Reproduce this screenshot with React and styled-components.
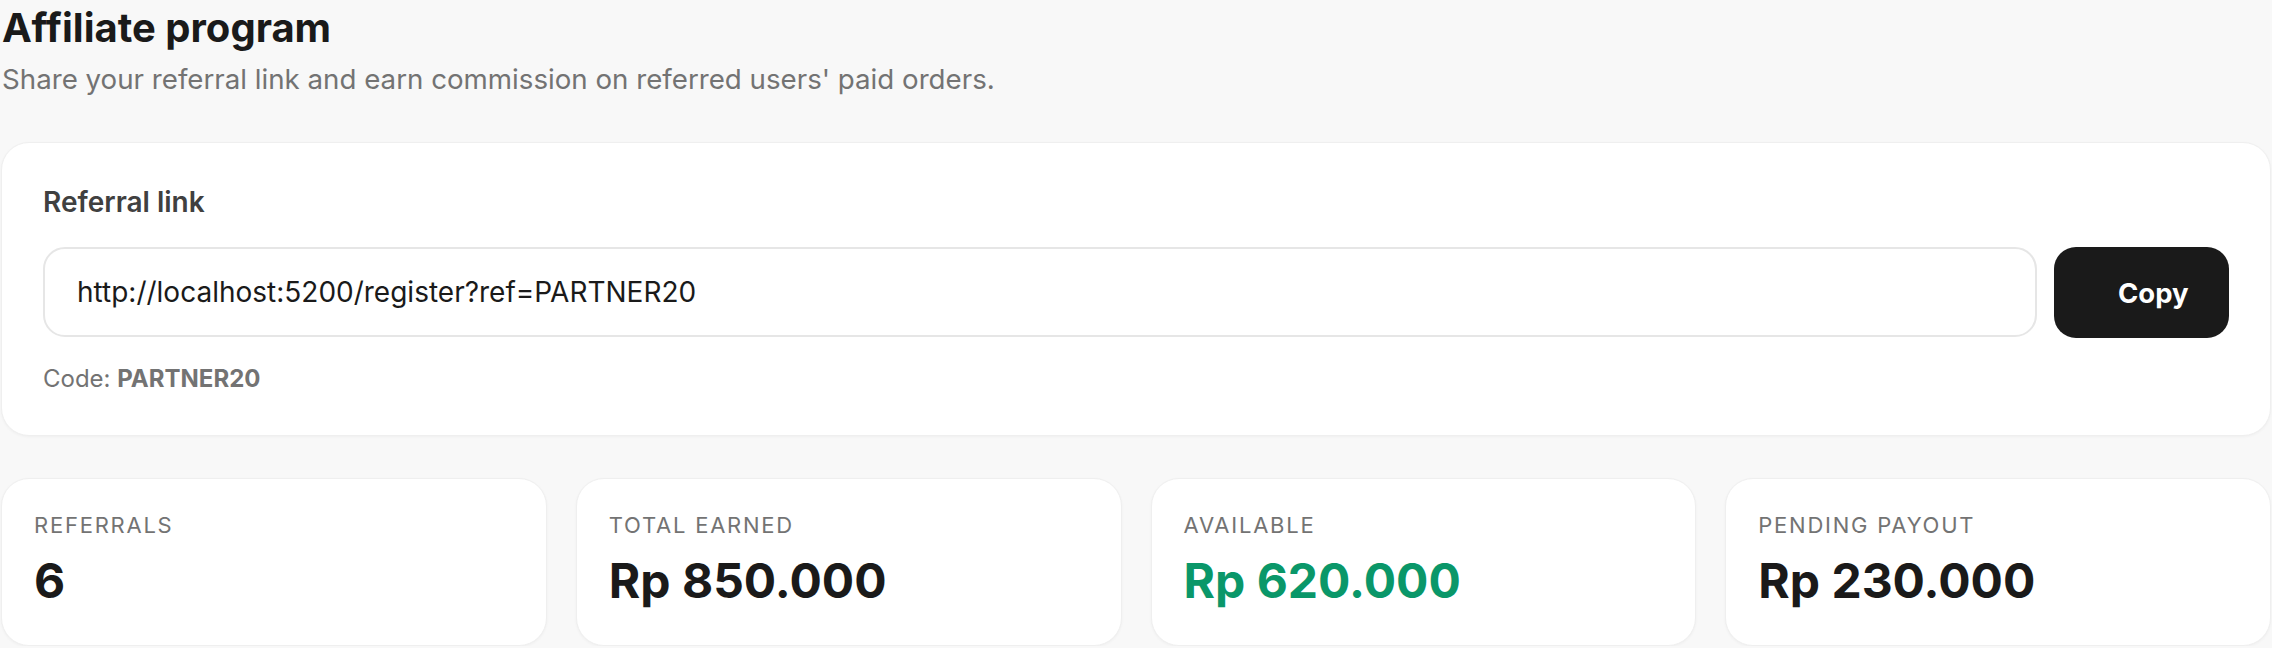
import React from "react";
import styled, { createGlobalStyle } from "styled-components";

const Global = createGlobalStyle`
  html, body { margin: 0; padding: 0; background: #f8f8f8; }
  body {
    font-family: Inter, "Noto Sans", sans-serif;
    color: #1a1a1a;
  }
  * { box-sizing: border-box; }
`;

const Page = styled.div`
  padding: 4px 1px 0 1px;
  display: flex;
  flex-direction: column;
`;

const Title = styled.h1`
  margin: 0 0 0 1px;
  font-size: 40px;
  line-height: 48px;
  font-weight: 700;
  color: #1a1a1a;
`;

const Subtitle = styled.p`
  margin: 9px 0 0 1px;
  font-size: 27.7px;
  line-height: 36px;
  color: #737373;
`;

const Card = styled.section`
  margin-top: 45px;
  background: #fff;
  border: 1px solid #efefef;
  border-radius: 28px;
  box-shadow: 0 1px 3px rgba(0, 0, 0, 0.04);
  padding: 40px 41px 40px 41px;
`;

const Label = styled.div`
  font-size: 28px;
  line-height: 39px;
  font-weight: 600;
  color: #404040;
  margin-bottom: 25px;
`;

const Row = styled.div`
  display: flex;
  gap: 17px;
  align-items: stretch;
`;

const LinkInput = styled.input`
  flex: 1;
  height: 90px;
  border: 2px solid #e6e6e6;
  border-radius: 22px;
  padding: 0 32px;
  font-family: inherit;
  font-size: 28px;
  color: #1a1a1a;
  background: #fff;
  outline: none;
`;

const CopyButton = styled.button`
  width: 175px;
  height: 91px;
  border: none;
  border-radius: 22px;
  background: #1a1a1a;
  color: #fff;
  font-family: inherit;
  font-size: 27.5px;
  font-weight: 700;
  padding: 0 38px 0 64px;
  text-align: left;
  cursor: pointer;
`;

const CodeLine = styled.div`
  margin-top: 24px;
  font-size: 24px;
  line-height: 33px;
  color: #737373;
  b { font-weight: 700; }
`;

const Stats = styled.div`
  margin-top: 42px;
  display: grid;
  grid-template-columns: repeat(4, 1fr);
  gap: 29px;
`;

const StatCard = styled.div`
  background: #fff;
  border: 1px solid #efefef;
  border-radius: 28px;
  box-shadow: 0 1px 3px rgba(0, 0, 0, 0.04);
  padding: 30px 32px 36px;
  height: 168px;
`;

const StatLabel = styled.div`
  font-size: 22px;
  line-height: 33px;
  letter-spacing: 0.08em;
  text-transform: uppercase;
  color: #737373;
`;

const StatValue = styled.div`
  margin-top: 10px;
  font-size: 48px;
  line-height: 58px;
  font-weight: 700;
  color: ${(p) => (p.$accent ? "#0a9769" : "#1a1a1a")};
`;

const stats = [
  { label: "Referrals", value: "6" },
  { label: "Total earned", value: "Rp 850.000" },
  { label: "Available", value: "Rp 620.000", accent: true },
  { label: "Pending payout", value: "Rp 230.000" },
];

export default function App() {
  const link = "http://localhost:5200/register?ref=PARTNER20";
  return (
    <>
      <Global />
      <Page>
        <Title>Affiliate program</Title>
        <Subtitle>Share your referral link and earn commission on referred users' paid orders.</Subtitle>
        <Card>
          <Label>Referral link</Label>
          <Row>
            <LinkInput readOnly value={link} />
            <CopyButton>Copy</CopyButton>
          </Row>
          <CodeLine>
            Code: <b>PARTNER20</b>
          </CodeLine>
        </Card>
        <Stats>
          {stats.map((s) => (
            <StatCard key={s.label}>
              <StatLabel>{s.label}</StatLabel>
              <StatValue $accent={s.accent}>{s.value}</StatValue>
            </StatCard>
          ))}
        </Stats>
      </Page>
    </>
  );
}
